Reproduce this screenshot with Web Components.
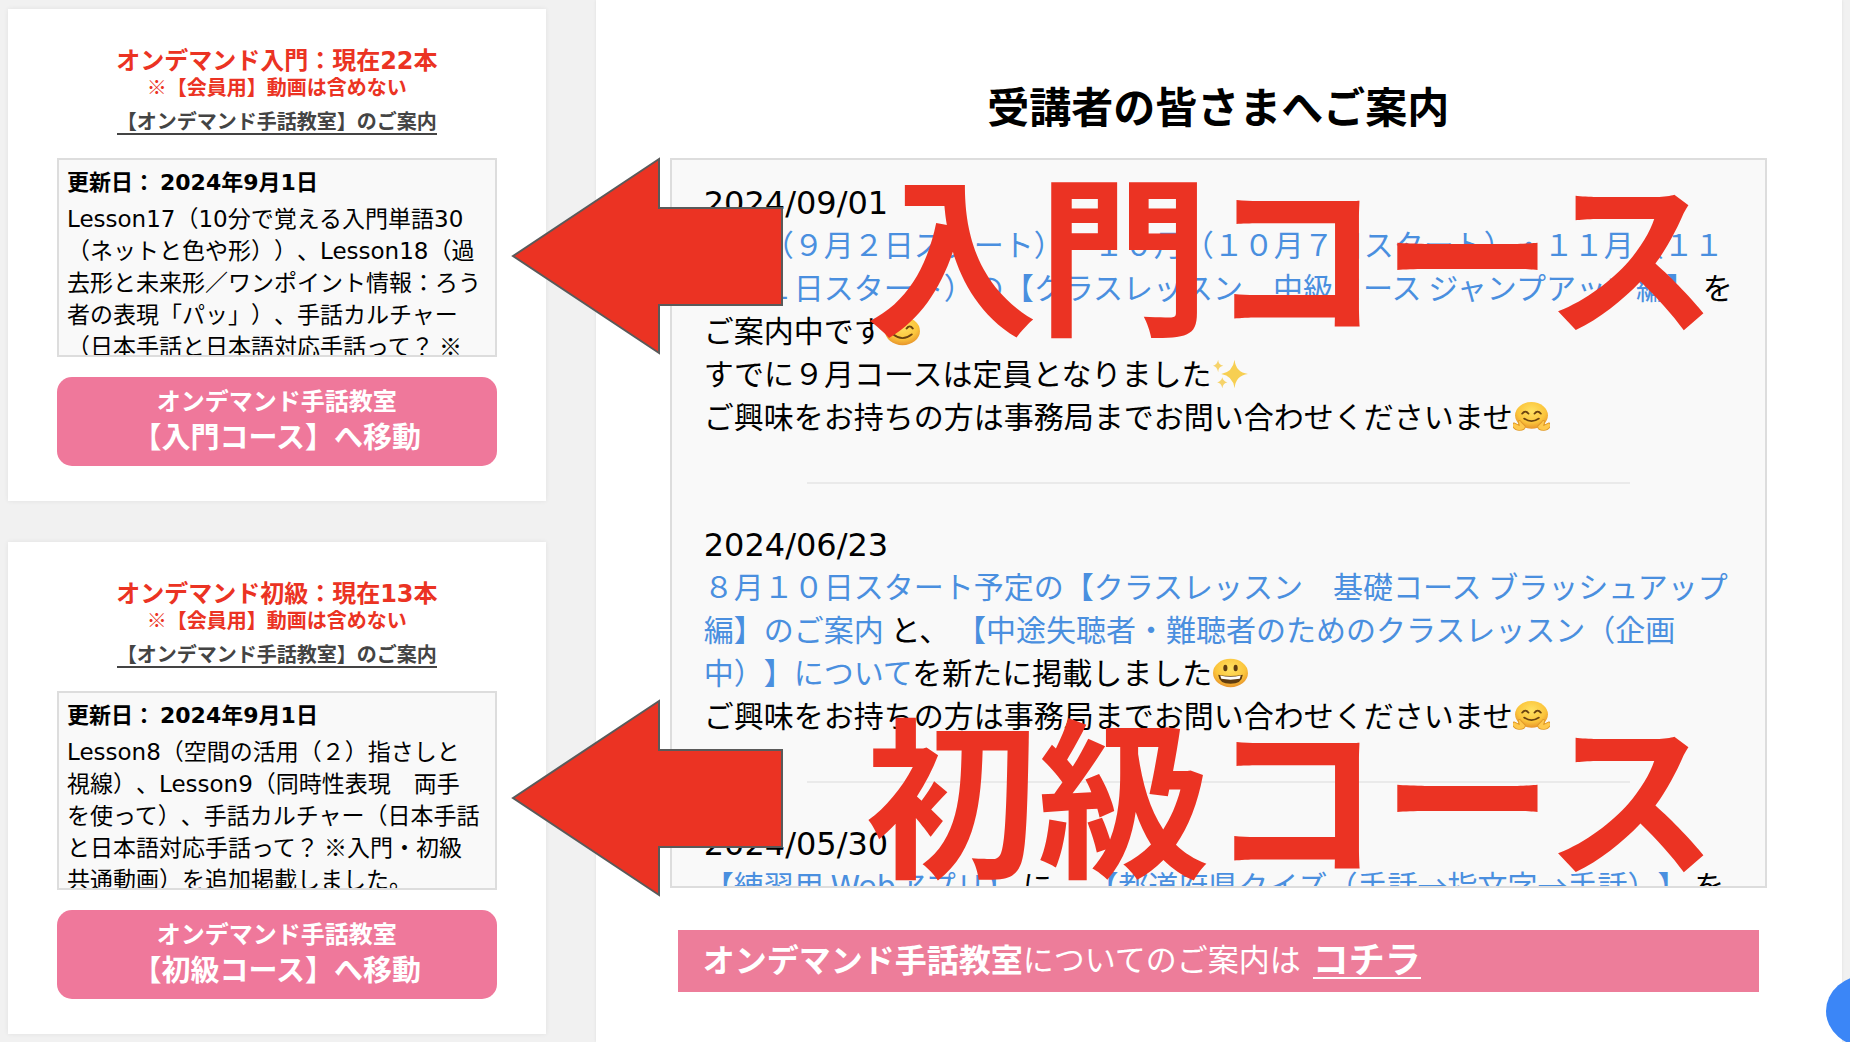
<!DOCTYPE html>
<html lang="ja">
<head>
<meta charset="utf-8">
<meta name="viewport" content="width=device-width, initial-scale=1">
<title>受講者の皆さまへご案内</title>
<style>
  :root {
    --jp: "Noto Sans CJK JP", sans-serif;
    --latin: "DejaVu Sans", "Noto Sans CJK JP", sans-serif;
    --red: #eb3323;
    --pink: #ef789b;
    --link: #4a8fdf;
  }
  html, body { height: 100%; }
  body {
    margin: 0;
    overflow: hidden;
    background: #f1f1f1;
    color: #000;
    font-family: var(--jp);
    text-spacing-trim: space-all;
  }
  .latin { font-family: var(--latin); line-height: 0; }
  notice-entry a { color: var(--link); text-decoration: none; }
</style>
</head>
<body>
<page-layout>
  <course-card slot="side" level="入門" count="22" updated="2024-9-1">
    <span class="latin">Lesson17</span>（<span class="latin">10</span>分で覚える入門単語<span class="latin">30</span><br>（ネットと色や形））、<span class="latin">Lesson18</span>（過<br>去形と未来形／ワンポイント情報：ろう<br>者の表現「パッ」）、手話カルチャー<br>（日本手話と日本語対応手話って？ ※
  </course-card>
  <course-card slot="side" level="初級" count="13" updated="2024-9-1">
    <span class="latin">Lesson8</span>（空間の活用（２）指さしと<br>視線）、<span class="latin">Lesson9</span>（同時性表現　両手<br>を使って）、手話カルチャー（日本手話<br>と日本語対応手話って？ ※入門・初級<br>共通動画）を追加掲載しました。
  </course-card>

  <notice-board>
    <span slot="title">受講者の皆さまへご案内</span>
    <notice-entry date="2024/09/01"><a href="#jump">９月（９月２日スタート）・１０月（１０月７日スタート）・１１月（１１<br>月１１日スタート）の【クラスレッスン　中級コース ジャンプアップ編】</a> を<br>ご案内中です<emoji-icon name="smile"></emoji-icon><br>すでに９月コースは定員となりました<emoji-icon name="sparkles"></emoji-icon><br>ご興味をお持ちの方は事務局までお問い合わせくださいませ<emoji-icon name="hug"></emoji-icon></notice-entry>
    <notice-entry date="2024/06/23"><a href="#brush">８月１０日スタート予定の【クラスレッスン　基礎コース ブラッシュアップ<br>編】のご案内</a> と、 <a href="#plan">【中途失聴者・難聴者のためのクラスレッスン（企画<br>中）】について</a>を新たに掲載しました<emoji-icon name="grin"></emoji-icon><br>ご興味をお持ちの方は事務局までお問い合わせくださいませ<emoji-icon name="hug"></emoji-icon></notice-entry>
    <notice-entry date="2024/05/30"><a href="#app">【練習用 <span class="latin">Web</span>アプリ】</a> に、 <a href="#quiz">【都道府県クイズ（手話→指文字→手話）】</a> を</notice-entry>
  </notice-board>
  <info-banner><b slot="lead">オンデマンド手話教室</b>についてのご案内は<a slot="link" href="#here">コチラ</a></info-banner>

  <course-callout slot="overlay" class="first">入門コース</course-callout>
  <course-callout slot="overlay" class="second">初級コース</course-callout>
  <chat-button slot="overlay"></chat-button>
</page-layout>

<script>
const define = (name, html, after) => {
  const template = document.createElement('template');
  template.innerHTML = html;
  customElements.define(name, class extends HTMLElement {
    constructor() {
      super();
      this.attachShadow({ mode: 'open' }).append(template.content.cloneNode(true));
    }
    connectedCallback() { if (after) after(this, this.shadowRoot); }
  });
};

define('page-layout', `
  <style>
    :host { display: flex; position: relative; height: 100%; overflow: hidden; }
    aside { box-sizing: border-box; width: 32.2%; padding: 9px 50px 9px 8px; display: flex; flex-direction: column; gap: 41px; }
    main { flex: 1; min-width: 0; margin-right: 8px; background: #fff; padding: 75px 75px 0 74px; box-shadow: 0 0 3px rgba(0,0,0,.08); }
    ::slotted(course-callout) { position: absolute; left: 27.6%; }
    ::slotted(.first) { top: 157px; }
    ::slotted(.second) { top: 699px; }
    ::slotted(chat-button) { position: absolute; right: -58px; bottom: -5px; }
  </style>
  <aside><slot name="side"></slot></aside>
  <main><slot></slot></main>
  <slot name="overlay"></slot>`);

define('course-card', `
  <style>
    :host { display: block; background: #fff; padding: 33px 49px 35px; box-shadow: 0 0 5px rgba(0,0,0,.07); text-align: center; white-space: nowrap; }
    h2, p { margin: 0; color: var(--red); font-weight: bold; }
    h2 { font-size: 24px; line-height: 33px; }
    p { font-size: 20px; line-height: 24px; }
    .latin { font-family: var(--latin); line-height: 0; }
    .guide { display: inline-block; vertical-align: top; margin-top: 10px; font-size: 20px; line-height: 24px; font-weight: bold; color: #444; text-decoration: none; border-bottom: 2px solid #444; }
    .log { box-sizing: border-box; height: 199px; margin-top: 23px; padding: 4px 8px 0; border: 2px solid #ddd; background: #f9f9f9; overflow: hidden; text-align: left; font-size: 23px; line-height: 32px; }
    .log strong { display: block; margin-bottom: 5px; font-size: 22px; line-height: 32px; }
    .go { display: block; margin-top: 20px; padding: 5px 0 13px; border-radius: 15px; background: var(--pink); color: #fff; font-weight: bold; font-size: 24px; line-height: 36px; text-decoration: none; }
    .go span { display: block; font-size: 29px; line-height: 35px; }
  </style>
  <h2>オンデマンド<span class="level"></span>：現在<span class="latin count"></span>本</h2>
  <p>※【会員用】動画は含めない</p>
  <a class="guide" href="#guide">【オンデマンド手話教室】のご案内</a>
  <div class="log"><strong>更新日： <span class="latin y"></span>年<span class="latin m"></span>月<span class="latin d"></span>日</strong><slot></slot></div>
  <a class="go" href="#course">オンデマンド手話教室<span class="to"></span></a>`,
  (el, root) => {
    const set = (sel, text) => { root.querySelector(sel).textContent = text; };
    const level = el.getAttribute('level');
    const [y, m, d] = el.getAttribute('updated').split('-');
    set('.level', level);
    set('.count', el.getAttribute('count'));
    set('.y', y); set('.m', m); set('.d', d);
    set('.to', '【' + level + 'コース】へ移動');
  });

define('notice-board', `
  <style>
    :host { display: block; }
    h1 { margin: 0; font-size: 42px; line-height: 60px; text-align: center; font-weight: bold; }
    .scroll { box-sizing: border-box; height: 730px; margin-top: 23px; padding: 22px 32px 0; border: 2px solid #ddd; background: #f9f9f9; overflow: hidden; }
  </style>
  <h1><slot name="title"></slot></h1>
  <div class="scroll"><slot></slot></div>`);

define('notice-entry', `
  <style>
    :host { display: block; font-size: 30px; line-height: 43px; white-space: nowrap; }
    time { display: block; height: 40px; font-family: var(--latin); font-size: 32px; }
    hr { width: 80%; height: 2px; margin: 45px auto 40px; border: 0; background: #eaeaea; }
  </style>
  <time></time><slot></slot><hr>`,
  (el, root) => { root.querySelector('time').textContent = el.getAttribute('date'); });

define('info-banner', `
  <style>
    :host { display: flex; box-sizing: border-box; align-items: center; height: 62px; margin: 42px 8px 0; padding: 0 25px 6px; background: #ed7d9a; color: #fff; font-size: 31px; line-height: 40px; white-space: nowrap; }
    ::slotted(b) { font-size: 32px; }
    ::slotted(a) { margin-left: 12px; font-size: 36px; font-weight: bold; color: #fff; text-decoration: none; border-bottom: 2px solid #fff; }
  </style>
  <slot name="lead"></slot><slot></slot><slot name="link"></slot>`);

define('course-callout', `
  <style>
    :host { display: flex; align-items: flex-start; gap: 81px; color: var(--red); font-size: 172px; line-height: 180px; font-weight: bold; white-space: nowrap; pointer-events: none; }
    svg { flex: none; display: block; }
  </style>
  <svg width="274" height="198" viewBox="0 0 274 198" aria-hidden="true"><path d="M2 99 148 2V51H271V148H148V196Z" fill="#eb3323" stroke="#5a5a5a" stroke-width="2"/></svg>
  <span><slot></slot></span>`);

const faces = {
  smile: `<circle cx="18" cy="18" r="17" fill="url(#g)"/><path d="M8 15q3-5 6 0M22 15q3-5 6 0" fill="none" stroke="#6b4310" stroke-width="2" stroke-linecap="round"/><path d="M9 22q9 9 18 0" fill="none" stroke="#6b4310" stroke-width="2" stroke-linecap="round"/>`,
  hug: `<circle cx="18" cy="16" r="16" fill="url(#g)"/><path d="M9 14q3-5 6 0M21 14q3-5 6 0" fill="none" stroke="#6b4310" stroke-width="2" stroke-linecap="round"/><path d="M11 20q7 6 14 0" fill="none" stroke="#6b4310" stroke-width="2" stroke-linecap="round"/><path d="M1 25l5 3-1-5q2-2 3 1l4 5q0 5-6 5-4 0-6-4-2-2 1-5ZM35 25l-5 3 1-5q-2-2-3 1l-4 5q0 5 6 5 4 0 6-4 2-2-1-5Z" fill="#ffc94d" stroke="#e09a28" stroke-width="1"/>`,
  grin: `<circle cx="18" cy="18" r="17" fill="url(#g)"/><ellipse cx="13" cy="12" rx="2" ry="4" fill="#5f3c10"/><ellipse cx="23" cy="12" rx="2" ry="4" fill="#5f3c10"/><path d="M6 20q12 3 24 0-1 11-12 11T6 20Z" fill="#5f3c10"/><path d="M8 21q10 3 20 0l-1 4q-9 2-18 0Z" fill="#fff"/>`,
  sparkles: `<path d="M22 1q1 15 13 17-12 2-13 17-2-15-13-17 11-2 13-17Z" fill="#f7cf52"/><path d="M6 1q0 6 5 7-5 1-5 8-1-7-5-8 4-1 5-7ZM10 22q1 5 5 6-4 1-5 7-1-6-5-7 4-1 5-6Z" fill="#f6d36a"/>`
};
const labels = { smile: '😊', hug: '🤗', grin: '😃', sparkles: '✨' };

define('emoji-icon', `
  <style>
    :host { display: inline-block; width: 37px; height: 30px; vertical-align: -4px; line-height: 0; }
    svg { display: block; width: 100%; height: 100%; }
  </style>
  <svg viewBox="0 0 36 36" preserveAspectRatio="none" role="img">
    <defs><radialGradient id="g" cx=".5" cy=".35" r=".65"><stop offset="0" stop-color="#ffe263"/><stop offset=".65" stop-color="#fbc53c"/><stop offset="1" stop-color="#e8952c"/></radialGradient></defs>
    <g></g>
  </svg>`,
  (el, root) => {
    const name = el.getAttribute('name');
    root.querySelector('svg').setAttribute('aria-label', labels[name]);
    root.querySelector('g').innerHTML = faces[name];
  });

define('chat-button', `
  <style>
    :host { display: block; }
    button { display: block; width: 82px; height: 72px; padding: 0; border: 0; border-radius: 50%; background: #3b86f7; }
  </style>
  <button type="button" aria-label="チャット"></button>`);
</script>
</body>
</html>
